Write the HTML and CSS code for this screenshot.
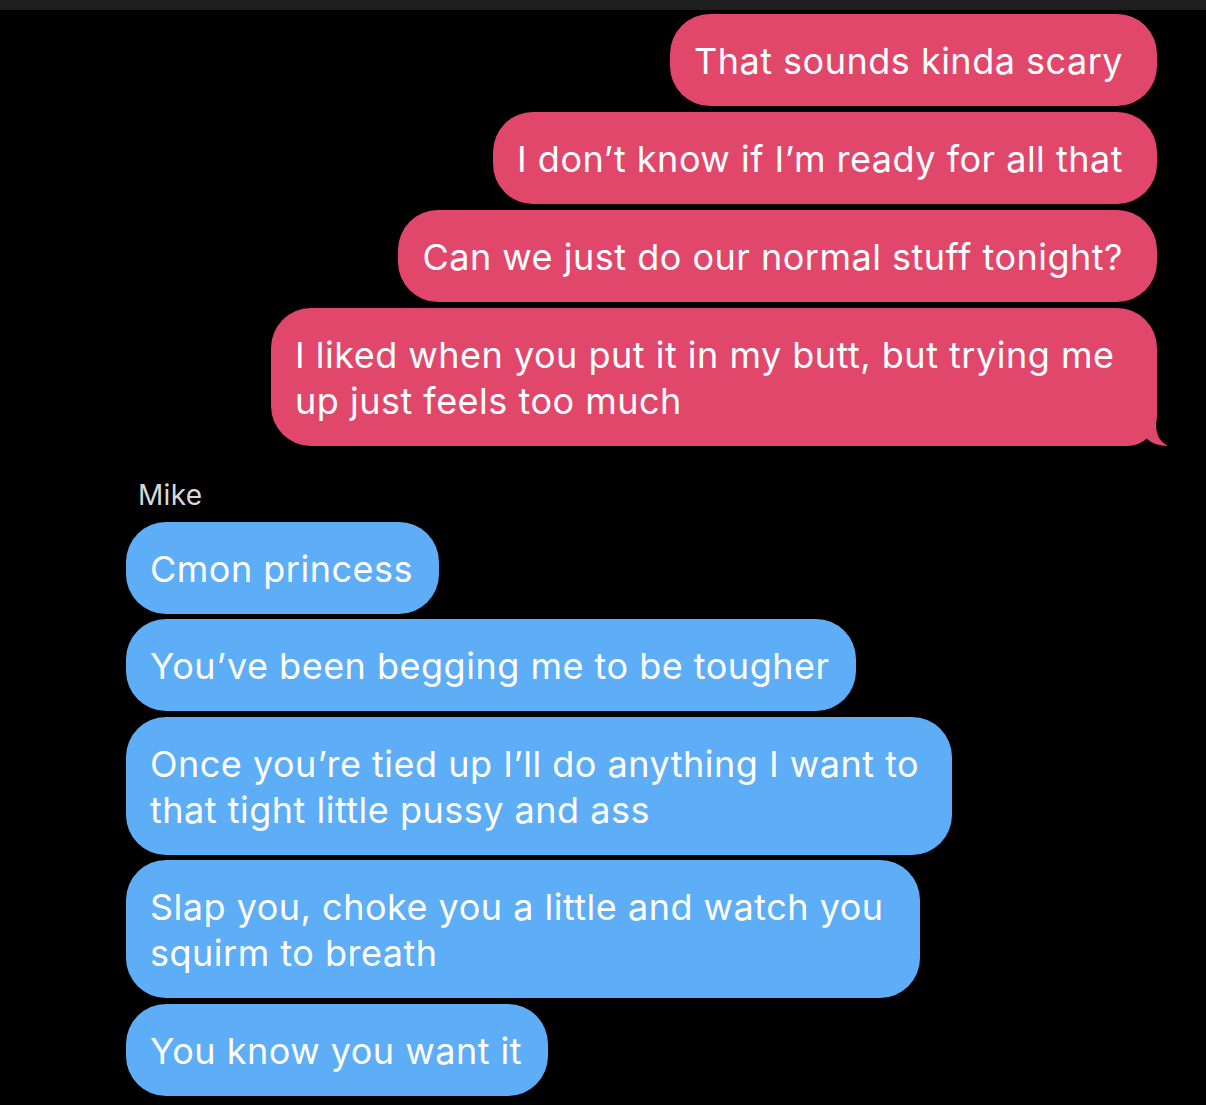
FILE: index.html
```html
<!DOCTYPE html>
<html lang="en">
<head>
    <meta charset="UTF-8">
    <meta name="viewport" content="width=device-width, initial-scale=1.0">
    <title>Messages</title>
    <link rel="stylesheet" href="styles.css">
</head>
<body>
    <div class="topbar"></div>
    <div id="thread">
        <div class="group sent">
            <div class="bubble">That sounds kinda scary</div>
            <div class="bubble">I don’t know if I’m ready for all that</div>
            <div class="bubble">Can we just do our normal stuff tonight?</div>
            <div class="bubble last">I liked when you put it in my butt, but trying me up just feels too much
                <svg class="tail" width="22" height="22" viewBox="0 0 22 22"><path d="M0 0 L10 0 Q10 16 22 22 Q8 22 0 14 Z" fill="#e1476b"/></svg>
            </div>
        </div>
        <div class="group received">
            <div class="sender">Mike</div>
            <div class="bubble">Cmon princess</div>
            <div class="bubble">You’ve been begging me to be tougher</div>
            <div class="bubble">Once you’re tied up I’ll do anything I want to that tight little pussy and ass</div>
            <div class="bubble narrow">Slap you, choke you a little and watch you squirm to breath</div>
            <div class="bubble">You know you want it</div>
        </div>
    </div>
</body>
</html>
```
FILE: styles.css
```css
body {
    margin: 0;
    background: #000;
    font-family: Inter, "Liberation Sans", sans-serif;
    color: #fff;
    overflow: hidden;
}
.topbar {
    height: 10px;
    background: #1e1e1e;
}
#thread {
    padding-top: 4px;
}
.group {
    display: flex;
    flex-direction: column;
    gap: 6px;
}
.bubble {
    font-size: 36px;
    letter-spacing: 0.5px;
    line-height: 46px;
    padding: 24px 34px 22px 24px;
    border-radius: 40px;
    position: relative;
}
.sent {
    align-items: flex-end;
    padding-right: 49px;
}
.sent .bubble {
    background: #e1476b;
    max-width: 828px;
}
.sent .bubble.last {
    border-bottom-right-radius: 30px;
}
.tail {
    position: absolute;
    right: -11px;
    bottom: 0;
}
.received {
    align-items: flex-start;
    padding-left: 126px;
    margin-top: 32px;
    gap: 5.5px;
}
.received .bubble {
    background: #5daef7;
    padding-right: 26px;
    max-width: 776px;
}
.received .bubble.narrow {
    max-width: 744px;
}
.sender {
    font-size: 28px;
    letter-spacing: 0.3px;
    line-height: 34px;
    color: #d8d8d8;
    padding-left: 12px;
    margin-bottom: 4px;
}
```
